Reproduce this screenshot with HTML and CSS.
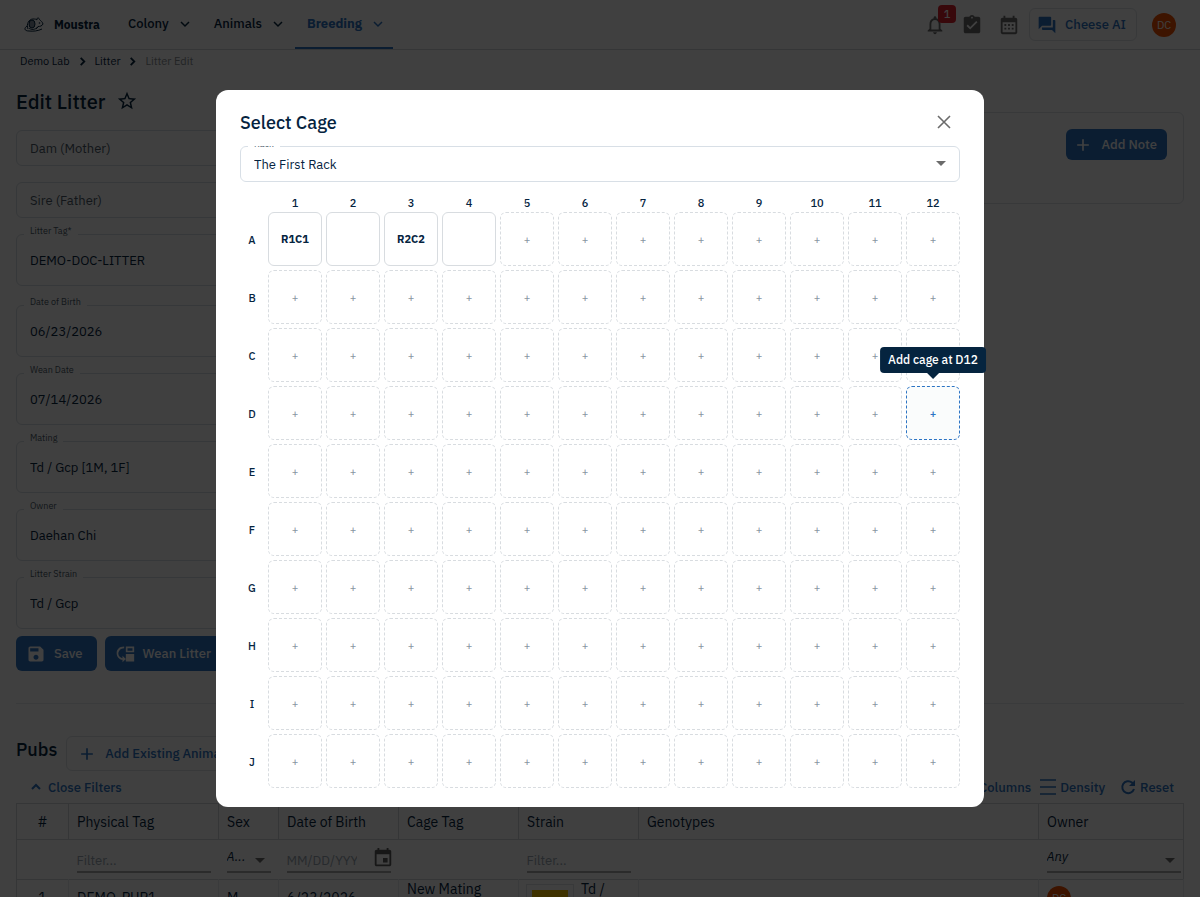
FILE: index.html
```
<!DOCTYPE html>
<html lang="en">
<head>
    <meta charset="UTF-8">
    <meta name="viewport" content="width=device-width, initial-scale=1.0">
    <title>Litter Edit - Moustra</title>
    <link rel="stylesheet" href="styles.css">
</head>
<body>
    <header class="topbar">
        <a class="brand" href="#">
            <svg width="20" height="16" viewBox="0 0 20 16" fill="none" stroke="currentColor">
                <path d="M4 12C2 7 5 2 9 2c2 0 3 0 4 1"/>
                <path d="M13 3c-1-2 2-3 2.500-.5C17 4 18.500 5 19 7c-1 2-3 2.500-5 2.500L12 12"/>
                <ellipse cx="8" cy="7" rx="3" ry="4" fill="currentColor" fill-opacity=".5"/>
                <path d="M5 11c2 2 6 2 9-1"/>
                <path d="M3 9c-3 2-3 5 2 5 4 .5 9 0 13-2"/>
                <circle cx="15.500" cy="6" r=".8" fill="currentColor" stroke="none"/>
            </svg>
            Moustra
        </a>
        <nav class="main-nav">
            <a href="#">Colony <svg class="chev" viewBox="0 0 10 10"><path d="M1 3l4 4 4-4"/></svg></a>
            <a href="#">Animals <svg class="chev" viewBox="0 0 10 10"><path d="M1 3l4 4 4-4"/></svg></a>
            <a href="#" class="active">Breeding <svg class="chev" viewBox="0 0 10 10"><path d="M1 3l4 4 4-4"/></svg></a>
        </nav>
        <div class="top-actions">
            <button class="icon-btn" aria-label="Notifications">
                <svg viewBox="0 0 24 24"><path d="M12 22c1.1 0 2-.9 2-2h-4c0 1.1.9 2 2 2m6-6v-5c0-3.07-1.63-5.64-4.5-6.32V4c0-.83-.67-1.5-1.5-1.5s-1.5.67-1.5 1.5v.68C7.64 5.36 6 7.92 6 11v5l-2 2v1h16v-1zm-2 1H8v-6c0-2.48 1.51-4.5 4-4.5s4 2.02 4 4.5z"/></svg>
                <span class="badge">1</span>
            </button>
            <button class="icon-btn" aria-label="Tasks">
                <svg viewBox="0 0 24 24"><path d="M19 3h-4.18C14.4 1.84 13.3 1 12 1s-2.4.84-2.82 2H5c-1.1 0-2 .9-2 2v14c0 1.1.9 2 2 2h14c1.1 0 2-.9 2-2V5c0-1.1-.9-2-2-2m-7 0c.55 0 1 .45 1 1s-.45 1-1 1-1-.45-1-1 .45-1 1-1m-2 14-4-4 1.41-1.41L10 14.17l6.59-6.59L18 9z"/></svg>
            </button>
            <button class="icon-btn" aria-label="Calendar">
                <svg viewBox="0 0 24 24"><path d="M19 4h-1V2h-2v2H8V2H6v2H5c-1.1 0-2 .9-2 2v14c0 1.1.9 2 2 2h14c1.1 0 2-.9 2-2V6c0-1.1-.9-2-2-2m0 16H5V9h14zM9 13H7v-2h2zm4 0h-2v-2h2zm4 0h-2v-2h2zm-8 4H7v-2h2zm4 0h-2v-2h2zm4 0h-2v-2h2z"/></svg>
            </button>
            <button class="btn outlined cheese">
                <svg viewBox="0 0 24 24"><path d="M21 6h-2v9H6v2c0 .55.45 1 1 1h11l4 4V7c0-.55-.45-1-1-1m-4 6V3c0-.55-.45-1-1-1H3c-.55 0-1 .45-1 1v14l4-4h10c.55 0 1-.45 1-1"/></svg>
                Cheese AI
            </button>
            <button class="avatar">DC</button>
        </div>
    </header>

    <main class="page">
        <nav class="breadcrumbs" aria-label="Breadcrumb">
            <a href="#">Demo Lab</a>
            <svg class="chev" viewBox="0 0 10 10"><path d="M3 1l4 4-4 4"/></svg>
            <a href="#">Litter</a>
            <svg class="chev" viewBox="0 0 10 10"><path d="M3 1l4 4-4 4"/></svg>
            <span>Litter Edit</span>
        </nav>

        <div class="title-row">
            <h1>Edit Litter</h1>
            <button class="star" aria-label="Favorite">
                <svg viewBox="0 0 24 24"><path d="m22 9.24-7.19-.62L12 2 9.19 8.63 2 9.24l5.46 4.73L5.82 21 12 17.27 18.18 21l-1.63-7.03zM12 15.4l-3.76 2.27 1-4.28-3.32-2.88 4.38-.38L12 6.1l1.71 4.04 4.38.38-3.32 2.88 1 4.28z"/></svg>
            </button>
        </div>

        <div class="edit-layout">
            <form class="litter-form">
                <input class="box small" type="text" placeholder="Dam (Mother)" aria-label="Dam (Mother)">
                <input class="box small" type="text" placeholder="Sire (Father)" aria-label="Sire (Father)">
                <div class="field">
                    <label for="tag">Litter Tag*</label>
                    <input class="box" id="tag" type="text" value="DEMO-DOC-LITTER">
                </div>
                <div class="field dob">
                    <label for="dob">Date of Birth</label>
                    <input class="box" id="dob" type="text" value="06/23/2026">
                </div>
                <div class="field">
                    <label for="wean">Wean Date</label>
                    <input class="box" id="wean" type="text" value="07/14/2026">
                </div>
                <div class="field">
                    <label for="mating">Mating</label>
                    <input class="box" id="mating" type="text" value="Td / Gcp [1M, 1F]">
                </div>
                <div class="field">
                    <label for="owner">Owner</label>
                    <input class="box" id="owner" type="text" value="Daehan Chi">
                </div>
                <div class="field">
                    <label for="strain">Litter Strain</label>
                    <input class="box" id="strain" type="text" value="Td / Gcp">
                </div>
                <div class="form-actions">
                    <button type="button" class="btn filled">
                        <svg viewBox="0 0 24 24"><path d="M17 3H5c-1.11 0-2 .9-2 2v14c0 1.1.89 2 2 2h14c1.1 0 2-.9 2-2V7zm-5 16c-1.66 0-3-1.34-3-3s1.34-3 3-3 3 1.34 3 3-1.34 3-3 3m3-10H5V5h10z"/></svg>
                        Save
                    </button>
                    <button type="button" class="btn filled">
                        <svg viewBox="0 0 24 24"><path d="M23 12h-10v9h10zM21 5v3h-6V5zm2-2h-10v7h10zM9 22l4-4-4-4v3c-3-.5-5-2.600-5-5.500S6.500 5 11 5V3C5 3 2 6.500 2 11 2 15 5 18.500 9 19z"/></svg>
                        Wean Litter
                    </button>
                </div>
            </form>
            <section class="notes">
                <button class="btn filled"><svg viewBox="0 0 24 24"><path d="M19 13h-6v6h-2v-6H5v-2h6V5h2v6h6z"/></svg>Add Note</button>
            </section>
        </div>

        <div class="pubs-head">
            <h2>Pubs</h2>
            <button class="btn outlined"><svg viewBox="0 0 24 24"><path d="M19 13h-6v6h-2v-6H5v-2h6V5h2v6h6z"/></svg>Add Existing Animals</button>
        </div>

        <div class="table-tools">
            <button class="tool"><svg class="chev" viewBox="0 0 10 10"><path d="M1 7l4-4 4 4"/></svg>Close Filters</button>
            <span class="spacer"></span>
            <button class="tool">Columns</button>
            <button class="tool"><svg width="16" height="16" viewBox="0 0 16 16" fill="none" stroke="currentColor" stroke-width="1.500"><path d="M0 1h16M0 8h16M0 15h16"/></svg>Density</button>
            <button class="tool reset"><svg width="16" height="16" viewBox="0 0 16 16" fill="none" stroke="currentColor" stroke-width="2"><path d="M14 10A6 6 0 1 1 12 3.500l2 2"/><path d="M15 1v6H9z" fill="currentColor" stroke="none"/></svg>Reset</button>
        </div>

        <table class="pubs">
            <colgroup>
                <col class="c-num"><col class="c-tag"><col class="c-sex"><col class="c-mid"><col class="c-mid"><col class="c-mid"><col><col class="c-owner">
            </colgroup>
            <thead>
                <tr>
                    <th class="num">#</th><th>Physical Tag</th><th>Sex</th><th>Date of Birth</th><th>Cage Tag</th><th>Strain</th><th>Genotypes</th><th>Owner</th>
                </tr>
                <tr class="filters">
                    <td></td>
                    <td><input type="text" placeholder="Filter..." aria-label="Filter physical tag"></td>
                    <td><div class="pick"><select aria-label="Filter sex"><option>A...</option></select></div></td>
                    <td>
                        <div class="date-filter">
                            <input type="text" placeholder="MM/DD/YYYY" aria-label="Filter date of birth">
                            <svg viewBox="0 0 24 24"><path d="M17 12h-5v5h5zM16 1v2H8V1H6v2H5c-1.11 0-1.99.9-1.990 2L3 19c0 1.100.89 2 2 2h14c1.100 0 2-.9 2-2V5c0-1.100-.9-2-2-2h-1V1zm3 18H5V8h14z"/></svg>
                        </div>
                    </td>
                    <td></td>
                    <td><input type="text" placeholder="Filter..." aria-label="Filter strain"></td>
                    <td></td>
                    <td><div class="pick wide"><select aria-label="Filter owner"><option>Any</option></select></div></td>
                </tr>
            </thead>
            <tbody>
                <tr>
                    <td class="num">1</td>
                    <td>DEMO-PUP1</td>
                    <td>M</td>
                    <td>6/23/2026</td>
                    <td>New Mating Cage</td>
                    <td><div class="strain"><span class="swatch"></span><span>Td / Gcp</span></div></td>
                    <td></td>
                    <td><span class="avatar">DC</span></td>
                </tr>
            </tbody>
        </table>
    </main>

    <div class="backdrop">
        <div class="dialog" role="dialog" aria-modal="true" aria-labelledby="dialogTitle">
            <div class="dialog-head">
                <h2 id="dialogTitle">Select Cage</h2>
                <button class="close" aria-label="Close"><svg viewBox="0 0 14 14"><path d="M1 1l12 12M13 1L1 13"/></svg></button>
            </div>
            <div class="dialog-body">
                <div class="field rack-field">
                    <label for="rack">Rack</label>
                    <select class="box" id="rack"><option>The First Rack</option></select>
                </div>
                <div class="rack" id="rackGrid"></div>
            </div>
        </div>
    </div>

    <script>
        const rows = 'ABCDEFGHIJ';
        const cols = 12;
        const cages = { A1: 'R1C1', A2: '', A3: 'R2C2', A4: '' };
        const hovered = 'D12';

        const grid = document.getElementById('rackGrid');
        let html = '<span></span>';
        for (let c = 1; c <= cols; c++) {
            html += `<span class="col-name">${c}</span>`;
        }
        for (const r of rows) {
            html += `<span class="row-name">${r}</span>`;
            for (let c = 1; c <= cols; c++) {
                const pos = r + c;
                if (pos in cages) {
                    html += `<button class="cell cage" aria-label="Cage ${pos}">${cages[pos]}</button>`;
                } else if (pos === hovered) {
                    html += `<button class="cell hovered">+<span class="tooltip">Add cage at ${pos}</span></button>`;
                } else {
                    html += `<button class="cell" aria-label="Add cage at ${pos}">+</button>`;
                }
            }
        }
        grid.innerHTML = html;
    </script>
</body>
</html>
```
FILE: styles.css
```
* {
    box-sizing: border-box;
}

body {
    margin: 0;
    height: 100vh;
    overflow: hidden;
    background-color: white;
    color: #05243f;
    font-family: "IBM Plex Sans", Roboto, sans-serif;
    font-size: 13px;
}

h1, h2 {
    margin: 0;
    font-weight: 500;
}

a {
    color: inherit;
    text-decoration: none;
}

button, input, select {
    font-family: inherit;
    font-size: inherit;
    color: inherit;
}

button {
    padding: 0;
    border: none;
    background: none;
    cursor: pointer;
}

.chev {
    width: 10px;
    height: 10px;
    fill: none;
    stroke: currentColor;
    stroke-width: 1.5;
}

/* top bar */
.topbar {
    display: flex;
    align-items: center;
    height: 50px;
    padding: 0 24px;
    border-bottom: 1px solid #d3d7db;
}

.brand {
    display: flex;
    align-items: center;
    gap: 10px;
    width: 92px;
    font-weight: 700;
    font-size: 12px;
}

.main-nav {
    display: flex;
    align-self: stretch;
    gap: 2px;
}

.main-nav a {
    display: flex;
    align-items: center;
    gap: 11px;
    padding: 0 10px 0 12px;
    font-weight: 500;
    border-bottom: 2px solid transparent;
}

.main-nav .active {
    color: #2c74c4;
    font-weight: 700;
    border-bottom-color: #2c74c4;
}

.top-actions {
    display: flex;
    align-items: center;
    gap: 15px;
    margin-left: auto;
}

.icon-btn {
    position: relative;
}

.icon-btn svg {
    display: block;
    width: 22px;
    height: 22px;
    fill: #6b6b6b;
}

.badge {
    position: absolute;
    top: -9px;
    right: -10px;
    width: 18px;
    height: 18px;
    border-radius: 4px;
    background-color: #e0202e;
    color: white;
    font-size: 11px;
    font-weight: 500;
    line-height: 18px;
}

.avatar {
    display: inline-block;
    width: 24px;
    height: 24px;
    border-radius: 50%;
    background-color: #f45100;
    color: white;
    font-size: 11px;
    line-height: 24px;
    text-align: center;
}

.btn {
    display: flex;
    align-items: center;
    gap: 8px;
    height: 35px;
    padding: 0 14px 0 10px;
    border-radius: 6px;
    font-weight: 500;
    white-space: nowrap;
}

.btn svg {
    width: 20px;
    height: 20px;
    fill: currentColor;
}

.filled {
    background-color: #2c74c4;
    color: white;
}

.outlined {
    border: 1px solid #dfe3e8;
    color: #2c74c4;
}

.cheese {
    height: 33px;
    padding: 0 10px 0 7px;
    margin-left: -6px;
}

/* page */
.page {
    padding: 0 16px;
}

.breadcrumbs {
    display: flex;
    align-items: center;
    gap: 8px;
    height: 22px;
    padding-left: 4px;
    font-size: 11px;
}

.breadcrumbs .chev {
    width: 9px;
    height: 9px;
    stroke-width: 2;
}

.breadcrumbs span {
    color: #8a8f94;
}

.title-row {
    display: flex;
    align-items: center;
    gap: 10px;
    height: 58px;
}

h1 {
    font-size: 20px;
}

.star svg {
    display: block;
    width: 22px;
    height: 22px;
    fill: currentColor;
}

.edit-layout {
    display: grid;
    grid-template-columns: 1fr 1fr;
    gap: 16px;
    padding-bottom: 32px;
    border-bottom: 1px solid #e8ebee;
}

.litter-form {
    display: flex;
    flex-direction: column;
    gap: 16px;
}

.box {
    display: block;
    width: 100%;
    height: 52px;
    padding: 0 13px;
    border: 1px solid #d8dfe6;
    border-radius: 6px;
    background-color: white;
    outline: none;
}

.box::placeholder {
    color: #4b5a68;
    opacity: 1;
}

.small {
    height: 36px;
}

.field {
    position: relative;
}

.field label {
    position: absolute;
    top: -8px;
    left: 8px;
    padding: 0 6px;
    background-color: white;
    color: #4b5a68;
    font-size: 9px;
    line-height: 10px;
}

.field.dob {
    margin-top: 3px;
}

.form-actions {
    display: flex;
    gap: 8px;
    margin-top: -9px;
}

.notes {
    display: flex;
    justify-content: flex-end;
    align-items: flex-start;
    align-self: start;
    height: 92px;
    margin-top: -18px;
    padding: 16px;
    border: 1px solid #dfe3e8;
    border-radius: 6px;
}

.notes .btn {
    height: 31px;
    padding: 0 10px 0 7px;
}

/* pubs */
.pubs-head {
    display: flex;
    align-items: flex-start;
    gap: 9px;
    margin-top: 32px;
}

.pubs-head h2 {
    font-size: 18px;
    line-height: 28px;
}

.table-tools {
    display: flex;
    align-items: center;
    gap: 9px;
    height: 32px;
    padding: 0 10px 0 15px;
    color: #2c74c4;
}

.tool {
    display: flex;
    align-items: center;
    gap: 4px;
    font-weight: 500;
}

.tool .chev {
    margin-right: 3px;
    stroke-width: 2;
}

.tool.reset {
    margin-left: 6px;
}

.spacer {
    flex: 1;
}

.pubs {
    width: 100%;
    table-layout: fixed;
    border-collapse: collapse;
    border: 1px solid #d3d7db;
    font-size: 14px;
}

.c-num {
    width: 52px;
}

.c-tag {
    width: 150px;
}

.c-sex {
    width: 60px;
}

.c-mid {
    width: 120px;
}

.c-owner {
    width: 145px;
}

.pubs th, .pubs td {
    height: 36px;
    padding: 0 8px;
    border-right: 1px solid #d3d7db;
    font-weight: 400;
    text-align: left;
    line-height: 18px;
}

.pubs tr {
    border-bottom: 1px solid #d3d7db;
}

.pubs .num {
    text-align: center;
}

.pubs .filters td {
    height: 40px;
    border-right: none;
}

.pubs tbody td {
    border-right-color: #e8ebee;
}

.filters input {
    width: 100%;
    height: 26px;
    padding: 4px 0 0;
    border: none;
    border-bottom: 2px solid #acacac;
    background: none;
    font-size: 13px;
}

.filters input::placeholder {
    color: #9ba7b2;
    opacity: 1;
}

.date-filter {
    display: flex;
    width: 104px;
    border-bottom: 2px solid #acacac;
}

.date-filter input {
    width: 70px;
    min-width: 0;
    height: 24px;
    border: none;
}

.date-filter svg {
    flex: none;
    width: 22px;
    height: 22px;
    margin: 0 -3px 0 auto;
    fill: #5c5c5c;
}

.pick {
    position: relative;
    width: 44px;
}

.pick.wide {
    width: auto;
    margin-right: -6px;
}

.pick select {
    width: 100%;
    height: 26px;
    padding: 0 0 4px;
    border: none;
    border-bottom: 2px solid #acacac;
    background: none;
    font-size: 13px;
    font-style: italic;
    appearance: none;
}

.pick::after, .rack-field::after {
    content: "";
    position: absolute;
    right: 6px;
    top: 11px;
    border: 5px solid transparent;
    border-top-color: #6b6b6b;
    border-bottom: none;
    pointer-events: none;
}

.strain {
    display: flex;
    align-items: center;
    gap: 8px;
    height: 18px;
    line-height: 18px;
}

.swatch {
    flex: none;
    width: 46px;
    height: 26px;
    border: 5px solid white;
    outline: 1px solid #dfe3e8;
    background-color: #fac800;
}

/* dialog */
.backdrop {
    position: fixed;
    inset: 0;
    display: flex;
    align-items: center;
    justify-content: center;
    background-color: rgba(0, 0, 0, 0.75);
}

.dialog {
    width: 64%;
    min-width: 600px;
    padding: 0 24px 19px;
    border-radius: 12px;
    background-color: white;
}

.dialog-head {
    display: flex;
    align-items: center;
    justify-content: space-between;
    height: 56px;
    padding: 8px 9px 0 0;
}

.dialog-head h2 {
    font-size: 18px;
}

.close svg {
    display: block;
    width: 14px;
    height: 14px;
    fill: none;
    stroke: #6b6b6b;
    stroke-width: 1.6;
}

.rack-field {
    overflow: hidden;
}

.rack-field label {
    top: -7px;
}

.rack-field .box {
    height: 36px;
    appearance: none;
}

.rack-field::after {
    top: 15px;
    right: 14px;
}

.rack {
    display: grid;
    grid-template-columns: 24px repeat(12, 1fr);
    gap: 4px;
    margin-top: 12px;
}

.col-name, .row-name {
    display: flex;
    align-items: center;
    justify-content: center;
    font-size: 11px;
    font-weight: 500;
}

.col-name {
    height: 14px;
    padding-top: 4px;
}

.row-name {
    padding-top: 2px;
}

.cell {
    position: relative;
    height: 54px;
    padding-top: 2px;
    border: 1px dashed #d8dce0;
    border-radius: 6px;
    color: #8795a1;
    font-size: 11px;
}

.cage {
    padding-top: 0;
    border-style: solid;
    color: #05243f;
    font-weight: 700;
}

.hovered {
    border-color: #2c74c4;
    background-color: #fafcfc;
    color: #2c74c4;
    font-weight: 500;
}

.tooltip {
    position: absolute;
    left: 50%;
    bottom: 100%;
    margin-bottom: 14px;
    padding: 0 8px;
    transform: translateX(-50%);
    border-radius: 4px;
    background-color: #05243f;
    color: white;
    font-size: 12px;
    line-height: 26px;
    white-space: nowrap;
}

.tooltip::after {
    content: "";
    position: absolute;
    left: 50%;
    top: 100%;
    margin-left: -6px;
    border: 6px solid transparent;
    border-top-color: #05243f;
    border-bottom: none;
}
```
